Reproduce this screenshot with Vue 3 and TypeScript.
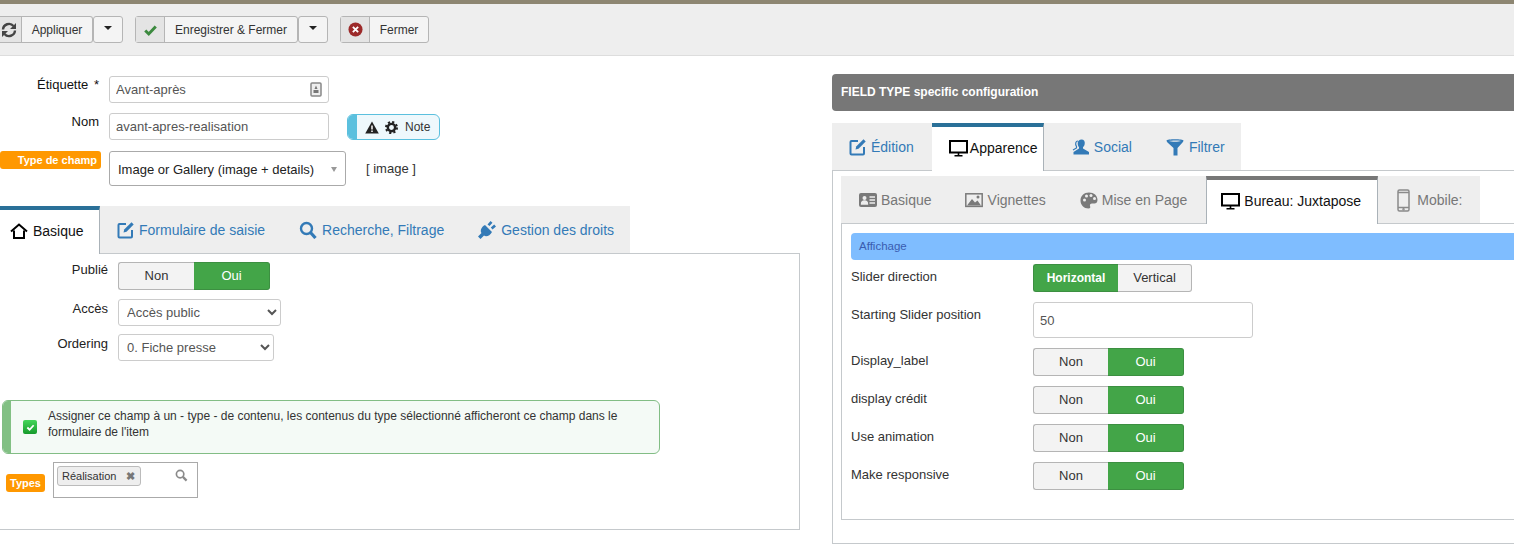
<script setup lang="ts">
const mainTabs = [
  { label: 'Formulaire de saisie', icon: 'edit' },
  { label: 'Recherche, Filtrage', icon: 'search' },
  { label: 'Gestion des droits', icon: 'plug' },
]
const yesNo = ['Display_label', 'display crédit', 'Use animation', 'Make responsive']
</script>

<template>
  <div class="page">
    <div class="topline"></div>
    <div class="toolbar">
      <div class="btn first">
        <span class="ic-cell first-cell">
          <svg width="16" height="16" viewBox="0 0 16 16" fill="none" stroke="#444" stroke-width="2.400"><path d="M2 7.500a6 6 0 0 1 10.500-3.500M14 8.500a6 6 0 0 1-10.500 3.500"/><path d="M15 1v6H9zM1 15V9h6z" fill="#444" stroke="none"/></svg>
        </span>
        <span class="lbl w70">Appliquer</span>
      </div>
      <div class="btn caret-btn"><i class="caret"></i></div>
      <div class="btn save">
        <span class="ic-cell">
          <svg width="15" height="14" viewBox="0 0 16 16" fill="none" stroke="#3c8a3f" stroke-width="3.400"><path d="M2 8.500l4 4 8-8.500"/></svg>
        </span>
        <span class="lbl w133">Enregistrer &amp; Fermer</span>
      </div>
      <div class="btn caret-btn"><i class="caret"></i></div>
      <div class="btn close">
        <span class="ic-cell">
          <svg width="15" height="15" viewBox="0 0 16 16"><circle cx="8" cy="8" r="7.500" fill="#9c2a2a"/><path d="M5.200 5.200l5.600 5.600M10.800 5.200l-5.600 5.600" stroke="#fff" stroke-width="2"/></svg>
        </span>
        <span class="lbl w59">Fermer</span>
      </div>
    </div>

    <div class="columns">
      <section class="left">
        <div class="frow first-row">
          <label class="flabel">Étiquette <span class="star">*</span></label>
          <div class="textbox">
            <input class="inp" value="Avant-après" readonly />
            <svg class="in-icon" width="12" height="15" viewBox="0 0 12 15"><rect x="1" y="1" width="10" height="13" rx="1" fill="#eee" stroke="#888" stroke-width="1.500"/><path d="M6 3.500l1.500 3.500h-3zM3.500 8h5v3h-5z" fill="#777"/></svg>
          </div>
        </div>
        <div class="frow second-row">
          <label class="flabel">Nom</label>
          <input class="inp name-inp" value="avant-apres-realisation" readonly />
          <div class="note">
            <span class="note-bar"></span>
            <svg width="14" height="13" viewBox="0 0 14 13"><path d="M7 .5L13.800 12.500H.2z" fill="#222"/><path d="M7 4.500v4M7 9.500v1.500" stroke="#fff" stroke-width="1.500"/></svg>
            <svg class="gear" width="13" height="13" viewBox="0 0 16 16" fill="none" stroke="#222"><circle cx="8" cy="8" r="4.500" stroke-width="3"/><circle cx="8" cy="8" r="6.800" stroke-width="2.400" stroke-dasharray="2.700 2.640"/></svg>
            <span>Note</span>
          </div>
        </div>
        <div class="frow third-row">
          <span class="badge type-badge">Type de champ</span>
          <div class="fake-select">
            <span>Image or Gallery (image + details)</span>
            <i class="small-caret"></i>
          </div>
          <span class="img-tag">[ image ]</span>
        </div>

        <div class="tabs main-tabs">
          <div class="tab active home-tab">
            <svg width="18" height="16" viewBox="0 0 18 16" fill="none" stroke="#000" stroke-width="2"><path d="M1 8.500L9 1.500l8 7"/><path d="M4 7.500V15h10V7.500"/></svg>
            Basique
          </div>
          <div v-for="t in mainTabs" :key="t.label" class="tab link" :class="'t-' + t.icon">
            <svg v-if="t.icon === 'edit'" width="18" height="18" viewBox="0 0 18 18" fill="none" stroke="#337ab7" stroke-width="2"><path d="M9 3H2.500a1 1 0 0 0-1 1v11.500a1 1 0 0 0 1 1H14a1 1 0 0 0 1-1V9"/><path d="M6.500 11.500l.7-3L14.500 1.300l2.200 2.200L9.500 10.800z" fill="#337ab7" stroke="none"/></svg>
            <svg v-else-if="t.icon === 'search'" width="18" height="18" viewBox="0 0 18 18" fill="none" stroke="#337ab7"><circle cx="7.500" cy="7.500" r="5.500" stroke-width="2.400"/><path d="M11.500 11.500l5 5.500" stroke-width="3.200"/></svg>
            <svg v-else width="18" height="18" viewBox="0 0 18 18" fill="#337ab7"><path d="M7 4L14 11C12 15 8 16 6 14.500L2.500 18 0 15.500 3.500 12C2 10 3 6 7 4z"/><path d="M9.500 3.500L12.500 0l2 1.800L11.500 5zM12.800 6.500l3.400-3L18 5.500l-3.500 3z"/></svg>
            {{ t.label }}
          </div>
        </div>
        <div class="pane main-pane">
          <div class="prow publie">
            <label class="plabel">Publié</label>
            <div class="toggle small">
              <span class="off">Non</span><span class="on">Oui</span>
            </div>
          </div>
          <div class="prow acces">
            <label class="plabel">Accès</label>
            <select class="sel acces-sel"><option>Accès public</option></select>
          </div>
          <div class="prow ordering">
            <label class="plabel">Ordering</label>
            <select class="sel order-sel"><option>0. Fiche presse</option></select>
          </div>
          <div class="alert">
            <span class="alert-bar"></span>
            <span class="check-box">
              <svg width="9" height="9" viewBox="0 0 10 10" fill="none" stroke="#fff" stroke-width="2"><path d="M1.500 5l2.500 2.500 4.500-5"/></svg>
            </span>
            <p>Assigner ce champ à un - type - de contenu, les contenus du type sélectionné afficheront ce champ dans le formulaire de l'item</p>
          </div>
          <div class="types-row">
            <span class="badge types-badge">Types</span>
            <div class="types-box">
              <span class="chip">Réalisation <b>✖</b></span>
              <svg class="chip-search" width="13" height="13" viewBox="0 0 14 14" fill="none" stroke="#8a8a8a"><circle cx="5.500" cy="5.500" r="4" stroke-width="1.800"/><path d="M8.500 8.500l4 4" stroke-width="2.400"/></svg>
            </div>
          </div>
        </div>
      </section>

      <section class="right">
        <div class="panel-head">FIELD TYPE specific configuration</div>
        <div class="tabs cfg-tabs">
          <div class="tab link cfg-edit">
            <svg width="18" height="18" viewBox="0 0 18 18" fill="none" stroke="#337ab7" stroke-width="2"><path d="M9 3H2.500a1 1 0 0 0-1 1v11.500a1 1 0 0 0 1 1H14a1 1 0 0 0 1-1V9"/><path d="M6.500 11.500l.7-3L14.500 1.300l2.200 2.200L9.500 10.800z" fill="#337ab7" stroke="none"/></svg>
            Édition
          </div>
          <div class="tab active cfg-app">
            <svg width="19" height="18" viewBox="0 0 19 18" fill="none" stroke="#000" stroke-width="2"><rect x="1" y="2" width="17" height="11.500"/><path d="M9.500 14v2.500M5.500 16.800h8" stroke-width="1.600"/></svg>
            Apparence
          </div>
          <div class="tab link cfg-social">
            <svg width="18" height="18" viewBox="0 0 18 18" fill="#337ab7"><path d="M9.500 1.500c2.500 0 3.700 2 3.200 4.500-.3 1.500-.9 2.500-1.700 3.200v1.300l6 3.500v2.500H1.500V14l5.500-3.500V9.200C5 7 5 1.500 9.500 1.500z"/><path d="M6 3C3.500 3 3 6 4.500 8.500V10L1 12" fill="none" stroke="#337ab7" stroke-width="1.200"/></svg>
            Social
          </div>
          <div class="tab link cfg-filter">
            <svg width="18" height="18" viewBox="0 0 18 18" fill="#337ab7"><path d="M.5 2.500C.5.800 17.500.8 17.500 2.500c0 .8-.5 1.500-1 2L11.500 10v7.500h-4V10L1.500 4.500c-.5-.5-1-1.200-1-2zM3 3c2 1 10 1 12 0-2-.8-10-.8-12 0z" fill-rule="evenodd"/></svg>
            Filtrer
          </div>
        </div>
        <div class="pane cfg-pane">
          <div class="tabs inner-tabs">
            <div class="tab muted in-basic">
              <svg width="18" height="14" viewBox="0 0 18 14"><rect width="18" height="14" rx="2" fill="#7a7a7a"/><circle cx="5.500" cy="5" r="2" fill="#eee"/><path d="M2.500 11c0-4 6-4 6 0zM10.500 4H16M10.500 7H16M10.500 10H16" fill="#eee" stroke="#eee" stroke-width="1.300"/></svg>
              Basique
            </div>
            <div class="tab muted in-thumb">
              <svg width="18" height="16" viewBox="0 0 18 16"><rect x=".8" y="1.800" width="16.400" height="12.600" fill="#eee" stroke="#7a7a7a" stroke-width="1.500"/><path d="M2 13.500l5-6.500 3 3.500 2.500-2 3.500 5z" fill="#7a7a7a"/><circle cx="13" cy="5" r="1.500" fill="#7a7a7a"/></svg>
              Vignettes
            </div>
            <div class="tab muted in-layout">
              <svg width="18" height="17" viewBox="0 0 18 17"><path d="M9 .5C4 .5.500 4 .5 8.500S4 16.500 8.500 16.500c2 0 2-1.500 1.500-2.500-.5-1.500.5-2.500 2-2.500h2.500c1.500 0 3-1 3-3.500C17.500 3.500 14 .5 9 .5z" fill="#7a7a7a"/><circle cx="4.500" cy="8" r="1.500" fill="#eee"/><circle cx="6.500" cy="4" r="1.500" fill="#eee"/><circle cx="11" cy="3.500" r="1.500" fill="#eee"/><circle cx="14.500" cy="6.500" r="1.500" fill="#eee"/></svg>
              Mise en Page
            </div>
            <div class="tab active in-desk">
              <svg width="19" height="18" viewBox="0 0 19 18" fill="none" stroke="#000" stroke-width="2"><rect x="1" y="2" width="17" height="11.500"/><path d="M9.500 14v2.500M5.500 16.800h8" stroke-width="1.600"/></svg>
              Bureau: Juxtapose
            </div>
            <div class="tab muted in-mobile">
              <svg width="13" height="23" viewBox="0 0 13 23" fill="none" stroke="#8a8a8a" stroke-width="1.500"><rect x="1" y="1" width="11" height="21" rx="1.500"/><path d="M1 3.500h11M1 18.500h11"/><circle cx="6.500" cy="20.300" r=".5"/></svg>
              Mobile:
            </div>
          </div>
          <div class="pane inner-pane">
            <div class="band">Affichage</div>
            <div class="crow dir">
              <label>Slider direction</label>
              <div class="toggle dir-toggle">
                <span class="on">Horizontal</span><span class="off">Vertical</span>
              </div>
            </div>
            <div class="crow pos">
              <label>Starting Slider position</label>
              <input class="inp pos-inp" value="50" readonly />
            </div>
            <div v-for="n in yesNo" :key="n" class="crow yn">
              <label>{{ n }}</label>
              <div class="toggle">
                <span class="off">Non</span><span class="on">Oui</span>
              </div>
            </div>
          </div>
        </div>
      </section>
    </div>
  </div>
</template>

<style>
html, body { margin: 0; background: #fff; }
</style>

<style scoped>
.page {
  width: 1514px;
  height: 552px;
  overflow: hidden;
  font-family: "Liberation Sans", Arial, sans-serif;
  font-size: 12px;
  color: #222;
  background: #fff;
}
.topline { height: 4px; background: #8d8672; }
.toolbar {
  height: 52px;
  box-sizing: border-box;
  background: #eee;
  border-bottom: 1px solid #ddd;
  padding-top: 12px;
  display: flex;
  align-items: flex-start;
}
.btn {
  height: 27px;
  box-sizing: border-box;
  display: flex;
  background: #f4f4f4;
  border: 1px solid #b5b5b5;
  border-radius: 3px;
  color: #333;
}
.first { margin-left: -8px; border-left-color: #ccc; }
.ic-cell {
  width: 28px;
  flex: none;
  display: flex;
  align-items: center;
  justify-content: center;
  background: #e4e4e4;
  border-right: 1px solid #b5b5b5;
}
.first-cell { width: 29px; padding-left: 3px; box-sizing: border-box; }
.lbl { display: flex; align-items: center; justify-content: center; box-sizing: border-box; }
.w70 { width: 70px; }
.w133 { width: 132px; }
.w59 { width: 58px; }
.caret-btn {
  width: 30px;
  align-items: center;
  justify-content: center;
}
.caret {
  width: 0; height: 0;
  border-left: 4.500px solid transparent;
  border-right: 4.500px solid transparent;
  border-top: 4.500px solid #222;
  margin-top: -3px;
}
.save { margin-left: 12px; }
.close { margin-left: 12px; }

.columns { display: flex; align-items: flex-start; }
.left { width: 800px; flex: none; padding-top: 20px; }
.right { width: 700px; flex: none; margin-left: 32px; padding-top: 18px; }

.frow { display: flex; align-items: flex-start; }
.second-row { margin-top: 10px; }
.third-row { margin-top: 11px; }
.flabel { width: 99px; margin-right: 10px; text-align: right; padding-top: 1px; line-height: 15px; color: #111; font-size: 13px; white-space: nowrap; }
.star { margin-left: 2px; }
.inp {
  box-sizing: border-box;
  height: 27px;
  width: 220px;
  border: 1px solid #ccc;
  border-radius: 3px;
  padding: 0 6px;
  font: 13px "Liberation Sans", Arial, sans-serif;
  color: #555;
  outline: none;
  background: #fff;
}
.textbox { position: relative; height: 27px; }
.in-icon { position: absolute; right: 7px; top: 6px; }
.note {
  margin: 1px 0 0 18px;
  width: 93px;
  height: 26px;
  box-sizing: border-box;
  border: 1px solid #5bc0de;
  border-radius: 6px;
  background: #eef8fc;
  display: flex;
  align-items: center;
  overflow: hidden;
  color: #333;
}
.note-bar { width: 9px; height: 100%; background: #5bc0de; margin-right: 8px; flex: none; }
.gear { margin-left: 6px; margin-right: 7px; }
.badge {
  background: #ff9800;
  color: #fff;
  font-weight: bold;
  font-size: 11px;
  border-radius: 3px;
  box-sizing: border-box;
  display: flex;
  align-items: center;
  justify-content: flex-end;
}
.type-badge { width: 101px; height: 18px; padding-right: 4px; margin-right: 8px; }
.fake-select {
  width: 237px;
  height: 35px;
  box-sizing: border-box;
  border: 1px solid #aaa;
  border-radius: 3px;
  display: flex;
  align-items: center;
  justify-content: space-between;
  padding: 1px 8px 0;
  color: #222;
  background: #fff;
  font-size: 13px;
  white-space: nowrap;
}
.small-caret {
  width: 0; height: 0;
  border-left: 3.500px solid transparent;
  border-right: 3.500px solid transparent;
  border-top: 5px solid #999;
}
.img-tag { margin-left: 20px; margin-top: 10px; line-height: 16px; color: #333; font-size: 13px; }

.tabs { display: flex; background: #eee; font-size: 14px; }
.main-tabs { width: 630px; height: 47px; margin-top: 20px; }
.tab {
  display: flex;
  align-items: center;
  gap: 5px;
  box-sizing: border-box;
  white-space: nowrap;
  padding-top: 1px;
}
.tab.active {
  background: #fff;
  color: #111;
  border-top: 4px solid #2a7098;
  border-right: 1px solid #aab2b8;
  height: 48px;
  position: relative;
  z-index: 1;
  padding-top: 0;
  padding-bottom: 2px;
}
.link { color: #337ab7; }
.muted { color: #777; }
.home-tab { width: 100px; padding-left: 10px; }
.t-edit { margin-left: 17px; gap: 4px; }
.t-search { margin-left: 34px; }
.t-plug { margin-left: 34px; }

.pane { border: 1px solid #c5c9cc; box-sizing: border-box; }
.main-pane {
  width: 800px;
  height: 277px;
  border-left: 0;
  padding-top: 8px;
}
.prow { display: flex; align-items: flex-start; }
.plabel { width: 108px; margin-right: 10px; text-align: right; line-height: 15px; color: #222; font-size: 13px; }
.acces .plabel, .ordering .plabel { padding-top: 2px; }
.toggle {
  display: inline-flex;
  width: 151px;
  height: 28px;
  box-sizing: border-box;
  line-height: 26px;
  text-align: center;
  font-size: 13px;
}
.toggle span { flex: 1 1 0; box-sizing: border-box; }
.toggle .off { background: #f3f3f3; border: 1px solid #b5b5b5; color: #333; }
.toggle .on { background: #43a548; border: 1px solid #3c8f41; color: #fff; }
.toggle span:first-child { border-radius: 3px 0 0 3px; border-right: 0; }
.toggle span:last-child { border-radius: 0 3px 3px 0; border-left: 0; }
.small { width: 152px; }
.acces { margin-top: 9px; }
.ordering { margin-top: 8px; }
.sel {
  height: 27px;
  box-sizing: border-box;
  border: 1px solid #ccc;
  border-radius: 3px;
  background: #fff;
  color: #555;
  font: 13px "Liberation Sans", Arial, sans-serif;
  padding-left: 4px;
}
.acces-sel { width: 163px; }
.order-sel { width: 156px; }
.alert {
  margin: 39px 0 0 2px;
  width: 658px;
  height: 54px;
  box-sizing: border-box;
  border: 1px solid #82bd85;
  border-radius: 6px;
  background: #f4faf6;
  display: flex;
  align-items: center;
  overflow: hidden;
}
.alert-bar { width: 8px; height: 100%; background: #82c084; flex: none; }
.check-box {
  width: 14px; height: 14px;
  margin-left: 12px;
  border-radius: 2px;
  background: linear-gradient(#45d65a, #169a2c);
  display: flex;
  align-items: center;
  justify-content: center;
  flex: none;
}
.alert p { margin: -7px 0 0 11px; line-height: 16px; font-size: 12px; color: #333; width: 590px; }
.types-row { display: flex; align-items: flex-start; margin: 8px 0 0 6px; }
.types-badge { width: 39px; height: 18px; margin: 12px 8px 0 0; justify-content: center; }
.types-box {
  width: 145px;
  height: 36px;
  box-sizing: border-box;
  border: 1px solid #aaa;
  position: relative;
  padding: 3px;
}
.chip {
  display: inline-flex;
  align-items: center;
  justify-content: space-between;
  width: 84px;
  height: 20px;
  box-sizing: border-box;
  padding: 0 5px 0 4px;
  background: #eee;
  border: 1px solid #bbb;
  border-radius: 3px;
  font-size: 11px;
  color: #333;
}
.chip b { font-size: 11px; color: #777; }
.chip-search { position: absolute; right: 9px; top: 6px; }

.panel-head {
  height: 37px;
  background: #777;
  border-radius: 4px 0 0 4px;
  color: #fff;
  font-weight: bold;
  line-height: 37px;
  padding-left: 9px;
}
.cfg-tabs { width: 409px; height: 47px; margin-top: 12px; }
.cfg-edit { margin-left: 17px; gap: 4px; }
.cfg-app { width: 112px; margin-left: 18px; padding-left: 17px; gap: 2px; }
.cfg-social { margin-left: 28px; gap: 4px; }
.cfg-filter { margin-left: 34px; }
.cfg-pane {
  height: 374px;
  border-right: 0;
  padding: 5px 0 0 8px;
}
.inner-tabs { width: 639px; height: 47px; }
.inner-tabs .tab.active { border-top-color: #777; border-left: 1px solid #aab2b8; }
.in-basic { margin-left: 18px; gap: 4px; }
.in-thumb { margin-left: 33px; }
.in-layout { margin-left: 34px; gap: 4px; }
.in-desk { width: 172px; margin-left: 19px; padding-left: 14px; gap: 4px; }
.in-mobile { margin-left: 19px; gap: 7px; }
.inner-pane {
  height: 297px;
  border-right: 0;
  padding: 9px 0 0 9px;
}
.band {
  height: 27px;
  background: #7fbdff;
  border-radius: 4px 0 0 4px;
  line-height: 27px;
  padding-left: 8px;
  font-size: 11.500px;
  color: #3a5cb0;
}
.crow { display: flex; align-items: flex-start; margin-top: 10px; }
.crow label { width: 182px; flex: none; line-height: 15px; color: #333; font-size: 13px; }
.crow .toggle .off { flex: 0 0 75px; }
.crow .toggle .on { flex: 1 1 0; }
.dir { margin-top: 4px; }
.dir label { padding-top: 5px; }
.dir-toggle { width: 159px; }
.crow .dir-toggle .on { flex: 0 0 85px; font-weight: bold; font-size: 12px; }
.crow .dir-toggle .off { flex: 1 1 0; }
.pos label { padding-top: 5px; }
.pos-inp { width: 220px; height: 36px; }
.yn label { padding-top: 5px; }
</style>
